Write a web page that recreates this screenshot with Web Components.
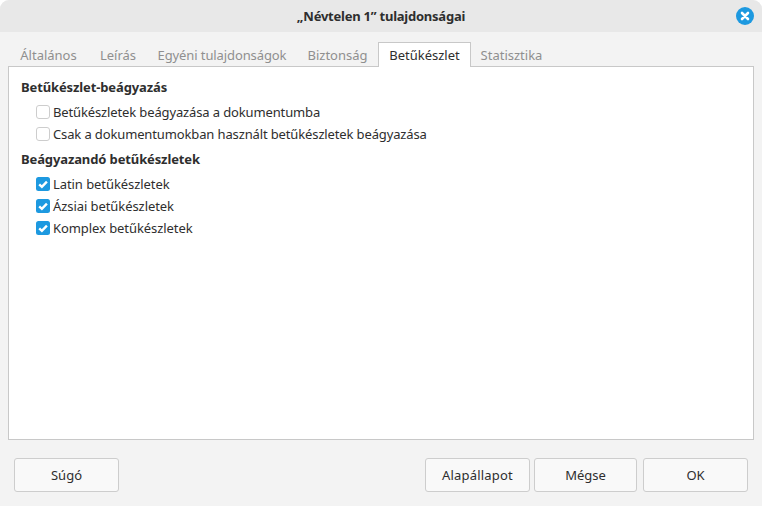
<!DOCTYPE html>
<html lang="hu">
<head>
<meta charset="utf-8">
<title>Névtelen 1 tulajdonságai</title>
<style>
    html, body { margin: 0; height: 100%; background: #fff; }
    body { font: 13px "Noto Sans", "Open Sans", sans-serif; color: #2e2e2e; overflow: hidden; }
    check-row { letter-spacing: -0.13px; }
    check-row[checked] { letter-spacing: -0.07px; }
</style>
</head>
<body>
<props-dialog heading="„Névtelen 1” tulajdonságai">
    <tab-bar slot="tabs">
        <tab-item w="81">Általános</tab-item>
        <tab-item w="58">Leírás</tab-item>
        <tab-item w="150" style="letter-spacing:-0.1px">Egyéni tulajdonságok</tab-item>
        <tab-item w="81">Biztonság</tab-item>
        <tab-item w="93" active>Betűkészlet</tab-item>
        <tab-item w="81">Statisztika</tab-item>
    </tab-bar>
    <option-group heading="Betűkészlet-beágyazás">
        <check-row>Betűkészletek beágyazása a dokumentumba</check-row>
        <check-row>Csak a dokumentumokban használt betűkészletek beágyazása</check-row>
    </option-group>
    <option-group heading="Beágyazandó betűkészletek">
        <check-row checked>Latin betűkészletek</check-row>
        <check-row checked>Ázsiai betűkészletek</check-row>
        <check-row checked>Komplex betűkészletek</check-row>
    </option-group>
    <dlg-button slot="left">Súgó</dlg-button>
    <dlg-button slot="right" style="letter-spacing:0.2px">Alapállapot</dlg-button>
    <dlg-button slot="right" w="103">Mégse</dlg-button>
    <dlg-button slot="right" class="ok">OK</dlg-button>
</props-dialog>

<script>
class PropsDialog extends HTMLElement {
    constructor() {
        super();
        this.attachShadow({ mode: 'open' });
        this.shadowRoot.innerHTML = `
            <style>
                :host { display: flex; flex-direction: column; height: 506px; background: #f3f3f3; border-radius: 9px 9px 0 0; overflow: hidden; }
                header {
                    height: 32px;
                    flex: none;
                    display: flex;
                    align-items: center;
                    justify-content: center;
                    position: relative;
                    background: #e8e8e8;
                    font-weight: 700;
                    letter-spacing: -0.23px;
                }
                .close { position: absolute; right: 8px; top: 7px; width: 18px; height: 18px; display: block; }
                .tabs { padding: 10px 8px 0; flex: none; }
                .panel {
                    flex: none;
                    height: 374px;
                    margin: 0 8px;
                    margin-top: -1px;
                    box-sizing: border-box;
                    background: #fff;
                    border: 1px solid #c8c8c8;
                    padding: 11px 12px;
                    display: flex;
                    flex-direction: column;
                    gap: 7px;
                }
                footer { display: flex; justify-content: space-between; padding: 18px 14px 0; }
                .right { display: flex; gap: 4px; }
                .right ::slotted(.ok) { margin-left: 2px; }
            </style>
            <header>
                <span id="title"></span>
                <svg class="close" viewBox="0 0 18 18">
                    <circle cx="9" cy="9" r="9" fill="#1d99e0"/>
                    <path d="M6 6l6 6M12 6l-6 6" stroke="#fff" stroke-width="2.6" stroke-linecap="round"/>
                </svg>
            </header>
            <div class="tabs"><slot name="tabs"></slot></div>
            <div class="panel"><slot></slot></div>
            <footer>
                <div><slot name="left"></slot></div>
                <div class="right"><slot name="right"></slot></div>
            </footer>
        `;
    }
    connectedCallback() {
        this.shadowRoot.getElementById('title').textContent = this.getAttribute('heading');
    }
}

class TabBar extends HTMLElement {
    constructor() {
        super();
        this.attachShadow({ mode: 'open' });
        this.shadowRoot.innerHTML = `
            <style>
                :host { display: flex; align-items: flex-end; height: 25px; position: relative; z-index: 1; }
            </style>
            <slot></slot>
        `;
    }
}

class TabItem extends HTMLElement {
    constructor() {
        super();
        this.attachShadow({ mode: 'open' });
        this.shadowRoot.innerHTML = `
            <style>
                :host {
                    display: flex;
                    align-items: center;
                    justify-content: center;
                    box-sizing: border-box;
                    height: 25px;
                    color: #8f8f8f;
                    white-space: nowrap;
                }
                :host([active]) {
                    color: #2e2e2e;
                    background: #fff;
                    border: 1px solid #c8c8c8;
                    border-bottom: 0;
                }
            </style>
            <slot></slot>
        `;
    }
    connectedCallback() {
        this.style.width = this.getAttribute('w') + 'px';
    }
}

class OptionGroup extends HTMLElement {
    constructor() {
        super();
        this.attachShadow({ mode: 'open' });
        this.shadowRoot.innerHTML = `
            <style>
                :host { display: block; }
                h3 { margin: 0 0 7px; font-size: 13px; font-weight: 700; line-height: 18px; letter-spacing: -0.12px; }
                .rows { padding-left: 15px; display: flex; flex-direction: column; gap: 4px; }
            </style>
            <h3 id="h"></h3>
            <div class="rows"><slot></slot></div>
        `;
    }
    connectedCallback() {
        this.shadowRoot.getElementById('h').textContent = this.getAttribute('heading');
    }
}

class CheckRow extends HTMLElement {
    constructor() {
        super();
        this.attachShadow({ mode: 'open' });
        this.shadowRoot.innerHTML = `
            <style>
                :host { display: flex; align-items: center; gap: 3px; height: 18px; line-height: 18px; white-space: nowrap; }
                .box { width: 14px; height: 14px; flex: none; display: block; }
            </style>
            <svg class="box" viewBox="0 0 14 14"></svg>
            <span><slot></slot></span>
        `;
    }
    connectedCallback() {
        const box = this.shadowRoot.querySelector('.box');
        if (this.hasAttribute('checked')) {
            box.innerHTML = '<rect width="14" height="14" rx="2.5" fill="#1d99e0"/>'
                + '<path d="M3.2 7.3l2.7 2.6 5-5.2" fill="none" stroke="#fff" stroke-width="2.4"/>';
        } else {
            box.innerHTML = '<rect x=".5" y=".5" width="13" height="13" rx="2.5" fill="#fff" stroke="#cdcdcd"/>';
        }
    }
}

class DlgButton extends HTMLElement {
    constructor() {
        super();
        this.attachShadow({ mode: 'open' });
        this.shadowRoot.innerHTML = `
            <style>
                :host {
                    display: flex;
                    align-items: center;
                    justify-content: center;
                    box-sizing: border-box;
                    width: 105px;
                    height: 34px;
                    background: #f9f9f9;
                    border: 1px solid #cdcdcd;
                    border-radius: 3px;
                }
            </style>
            <slot></slot>
        `;
    }
    connectedCallback() {
        if (this.hasAttribute('w')) this.style.width = this.getAttribute('w') + 'px';
    }
}

customElements.define('props-dialog', PropsDialog);
customElements.define('tab-bar', TabBar);
customElements.define('tab-item', TabItem);
customElements.define('option-group', OptionGroup);
customElements.define('check-row', CheckRow);
customElements.define('dlg-button', DlgButton);
</script>
</body>
</html>
